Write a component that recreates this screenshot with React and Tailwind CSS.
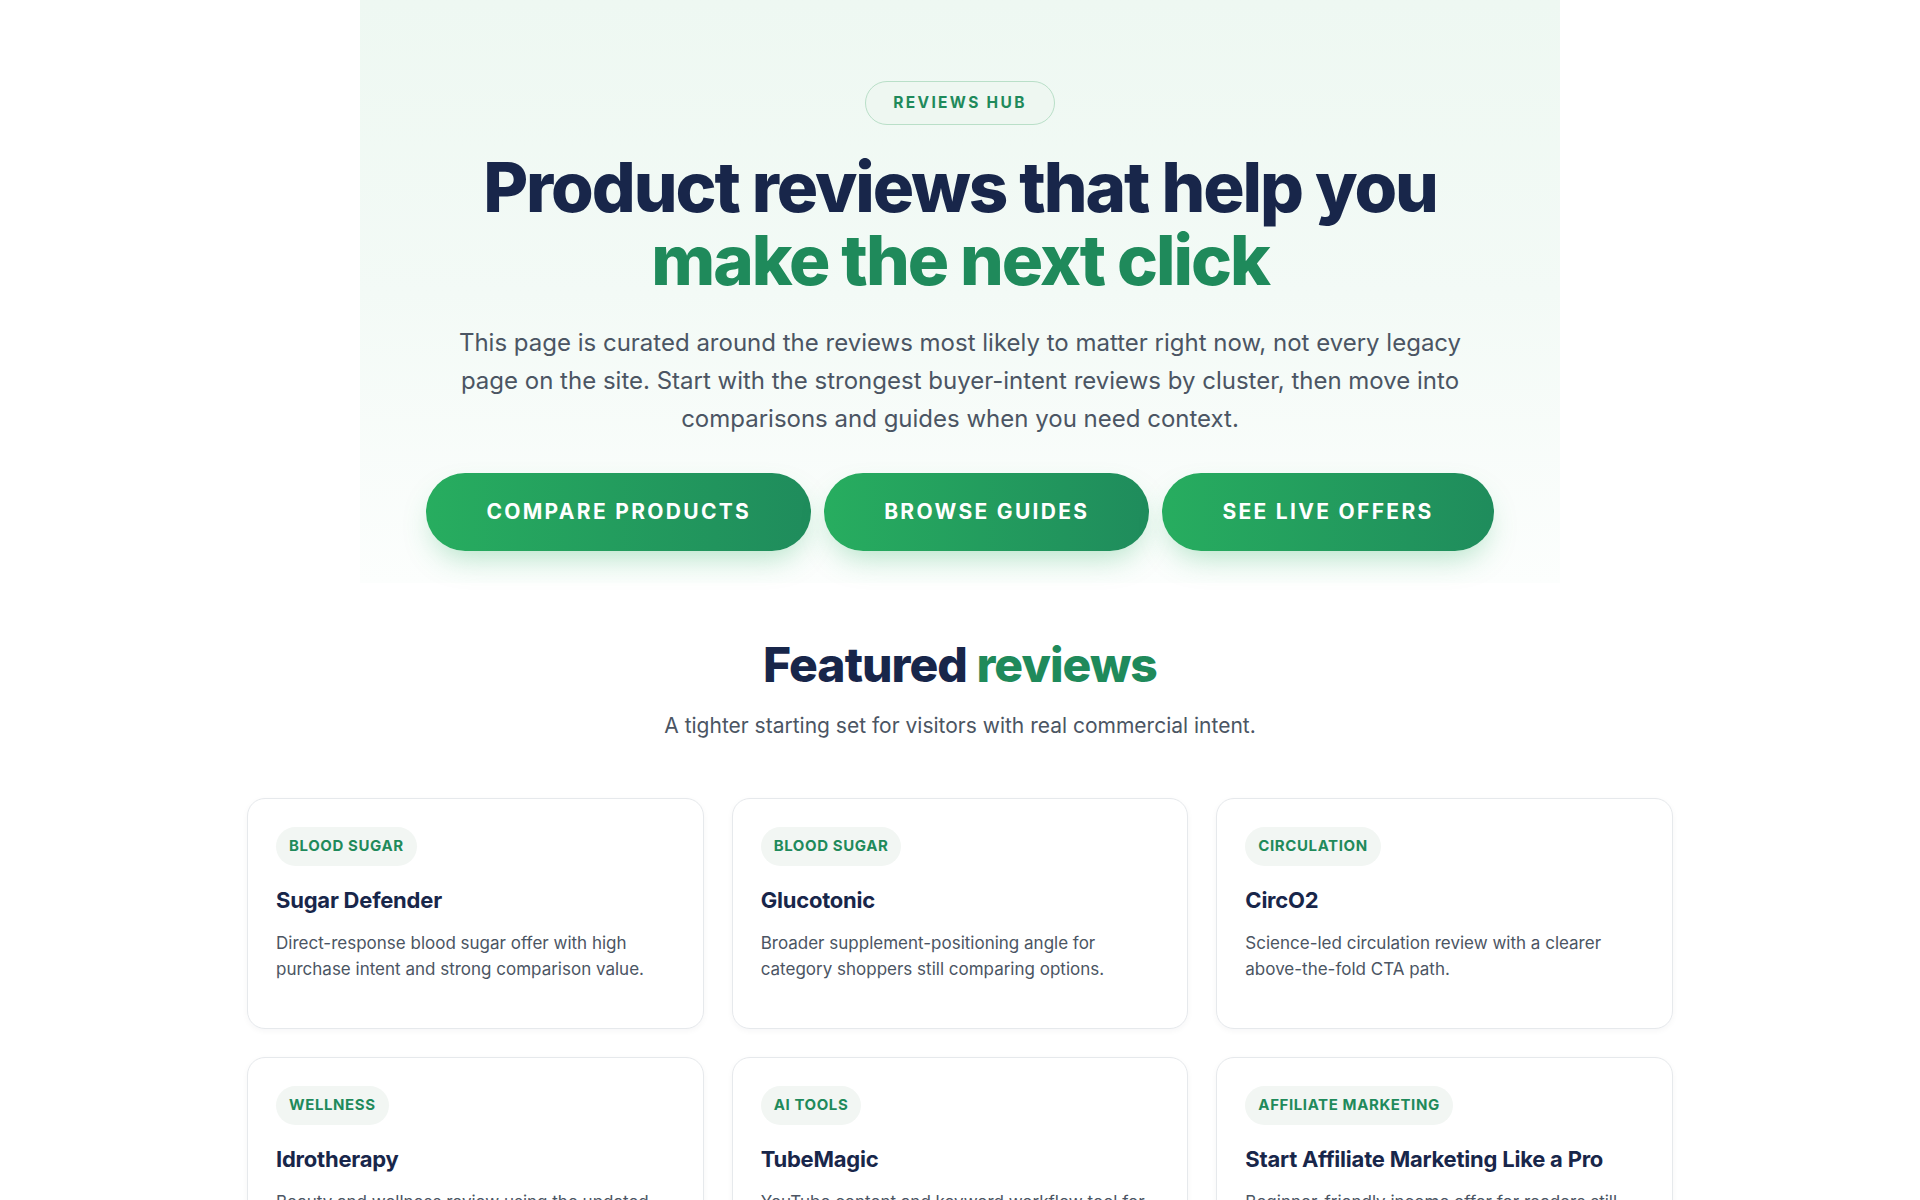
const cards = [
  {
    tag: "BLOOD SUGAR",
    title: "Sugar Defender",
    text: "Direct-response blood sugar offer with high purchase intent and strong comparison value.",
  },
  {
    tag: "BLOOD SUGAR",
    title: "Glucotonic",
    text: "Broader supplement-positioning angle for category shoppers still comparing options.",
  },
  {
    tag: "CIRCULATION",
    title: "CircO2",
    text: "Science-led circulation review with a clearer above-the-fold CTA path.",
  },
  {
    tag: "WELLNESS",
    title: "Idrotherapy",
    text: "Beauty and wellness review using the updated offer page and clearer buyer framing.",
  },
  {
    tag: "AI TOOLS",
    title: "TubeMagic",
    text: "YouTube content and keyword workflow tool for creators who want faster output.",
  },
  {
    tag: "AFFILIATE MARKETING",
    title: "Start Affiliate Marketing Like a Pro",
    text: "Beginner-friendly income offer for readers still deciding where to start online.",
  },
];

function HeroButton({ children }) {
  return (
    <a
      href="#"
      className="flex h-[78px] items-center justify-center rounded-full bg-gradient-to-r from-[#27ad5f] to-[#1f8c5c] px-[60px] text-[21px] font-bold tracking-[0.11em] text-white shadow-[0_14px_30px_-8px_rgba(39,174,96,0.35)]"
    >
      {children}
    </a>
  );
}

function ReviewCard({ tag, title, text }) {
  return (
    <div className="flex min-h-[231px] flex-col items-start rounded-[18px] border border-[#e6e9ec] bg-white px-[28px] pt-[28px] pb-[28px] shadow-[0_2px_6px_rgba(15,23,42,0.04)]">
      <span className="flex h-[39px] items-center rounded-full bg-[#f2f6f3] px-[13px] text-[15px] font-bold tracking-[0.04em] text-[#1f8a5b]">
        {tag}
      </span>
      <h3 className="mt-[19px] text-[22px] leading-[30px] font-bold tracking-[-0.01em] text-[#18264a]">
        {title}
      </h3>
      <p className="mt-[15px] text-[17px] leading-[26px] text-[#4b5563]">{text}</p>
    </div>
  );
}

export default function App() {
  return (
    <div
      className="min-h-screen bg-white"
      style={{ fontFamily: "Inter, 'Noto Sans', 'Liberation Sans', sans-serif" }}
    >
      <section className="mx-auto flex w-[1200px] flex-col items-center bg-gradient-to-b from-[#eef8f2] via-[#f3faf6] to-[#fcfefd] pt-[81px] pb-[32px]">
        <span className="flex h-[44px] items-center rounded-full border border-[#b9dfc8] bg-[#eef7f1] px-[27px] text-[15.5px] font-bold tracking-[0.15em] text-[#1f8a5b]">
          REVIEWS HUB
        </span>
        <h1 className="mt-[26px] text-center text-[69px] leading-[73px] font-extrabold tracking-[-0.03em] text-[#18264a]">
          Product reviews that help you
          <br />
          <span className="text-[#1f8a5b]">make the next click</span>
        </h1>
        <p className="mt-[27px] max-w-[1010px] text-center text-[24px] leading-[38px] text-[#4b5563]">
          This page is curated around the reviews most likely to matter right now, not every legacy page on the
          site. Start with the strongest buyer-intent reviews by cluster, then move into comparisons and guides
          when you need context.
        </p>
        <div className="mt-[35px] flex gap-[13px]">
          <HeroButton>COMPARE PRODUCTS</HeroButton>
          <HeroButton>BROWSE GUIDES</HeroButton>
          <HeroButton>SEE LIVE OFFERS</HeroButton>
        </div>
      </section>

      <section className="mx-auto mt-[53px] w-[1426px] pb-16">
        <h2 className="text-center text-[48px] leading-[58px] font-extrabold tracking-[-0.02em] text-[#18264a]">
          Featured <span className="text-[#1f8a5b]">reviews</span>
        </h2>
        <p className="mt-[17px] text-center text-[21px] leading-[30px] text-[#4b5563]">
          A tighter starting set for visitors with real commercial intent.
        </p>
        <div className="mt-[57px] grid grid-cols-3 gap-[28px]">
          {cards.map((c, i) => (
            <ReviewCard key={i} {...c} />
          ))}
        </div>
      </section>
    </div>
  );
}
